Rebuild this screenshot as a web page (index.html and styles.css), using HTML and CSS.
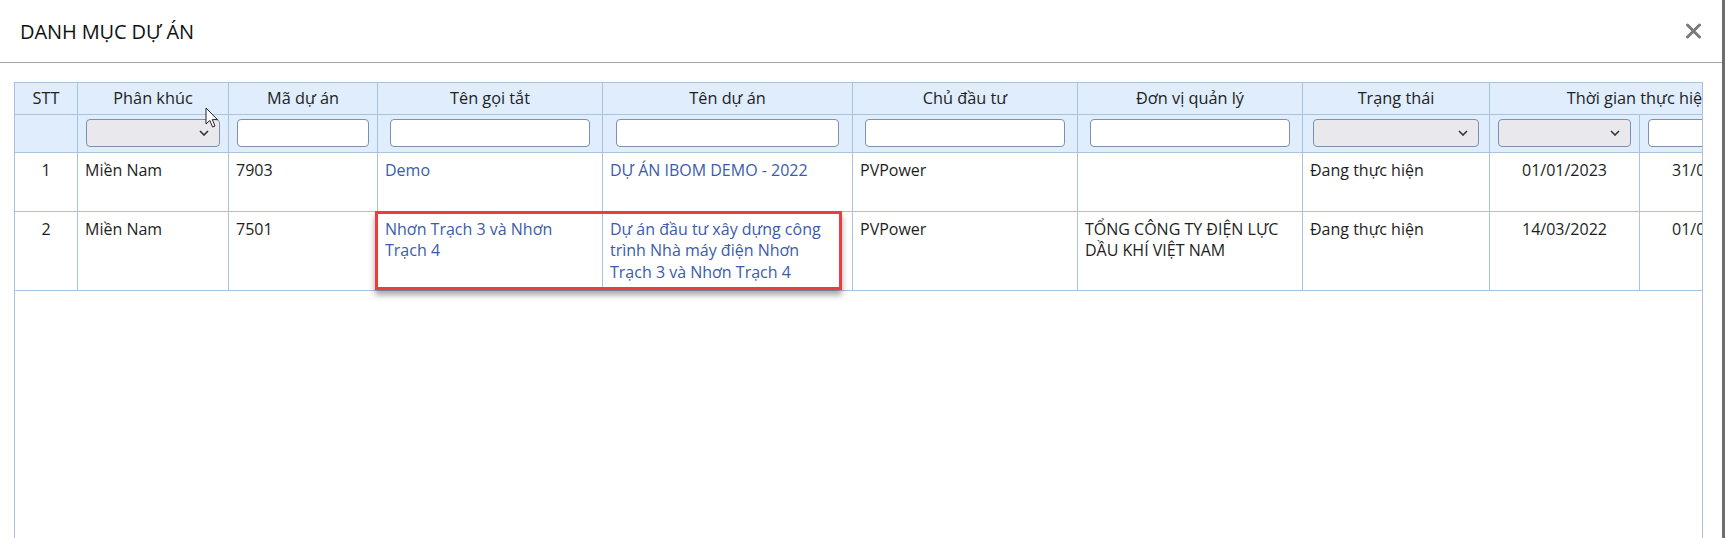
FILE: index.html
```html
<!DOCTYPE html>
<html lang="vi">
<head>
<meta charset="utf-8">
<title>Danh mục dự án</title>
<link rel="stylesheet" href="styles.css">
</head>
<body>
<div class="dialog">
  <div class="dialog-header">
    <h4 class="dialog-title">DANH MỤC DỰ ÁN</h4>
    <button class="close-btn" type="button" aria-label="Đóng">
      <svg width="17" height="16" viewBox="0 0 17 16"><path d="M2.5 2 L14.5 14 M14.5 2 L2.5 14" stroke="#7a7a7a" stroke-width="3" stroke-linecap="round"/></svg>
    </button>
  </div>
  <div class="dialog-body">
    <div class="grid-wrap">
      <table class="grid">
        <colgroup>
          <col class="c-stt"><col class="c-150"><col class="c-149"><col class="c-225"><col class="c-250"><col class="c-225"><col class="c-225"><col class="c-187"><col class="c-150"><col class="c-150">
        </colgroup>
        <thead>
          <tr class="head-row">
            <th>STT</th>
            <th>Phân khúc</th>
            <th>Mã dự án</th>
            <th>Tên gọi tắt</th>
            <th>Tên dự án</th>
            <th>Chủ đầu tư</th>
            <th>Đơn vị quản lý</th>
            <th>Trạng thái</th>
            <th colspan="2" class="last">Thời gian thực hiện</th>
          </tr>
          <tr class="filter-row">
            <th></th>
            <th><div class="f-select"><svg width="10" height="6" viewBox="0 0 10 6"><path d="M1 1 L5 5 L9 1" fill="none" stroke="#333" stroke-width="1.6"/></svg></div></th>
            <th><div class="f-input"></div></th>
            <th><div class="f-input"></div></th>
            <th><div class="f-input"></div></th>
            <th><div class="f-input"></div></th>
            <th><div class="f-input"></div></th>
            <th><div class="f-select"><svg width="10" height="6" viewBox="0 0 10 6"><path d="M1 1 L5 5 L9 1" fill="none" stroke="#333" stroke-width="1.6"/></svg></div></th>
            <th><div class="f-select"><svg width="10" height="6" viewBox="0 0 10 6"><path d="M1 1 L5 5 L9 1" fill="none" stroke="#333" stroke-width="1.6"/></svg></div></th>
            <th class="last"><div class="f-input"></div></th>
          </tr>
        </thead>
        <tbody>
          <tr class="row-1">
            <td class="center">1</td>
            <td>Miền Nam</td>
            <td>7903</td>
            <td><a class="link">Demo</a></td>
            <td><a class="link">DỰ ÁN IBOM DEMO - 2022</a></td>
            <td>PVPower</td>
            <td></td>
            <td>Đang thực hiện</td>
            <td class="center">01/01/2023</td>
            <td class="center last">31/01/2024</td>
          </tr>
          <tr>
            <td class="center">2</td>
            <td>Miền Nam</td>
            <td>7501</td>
            <td><a class="link">Nhơn Trạch 3 và Nhơn Trạch 4</a></td>
            <td><a class="link">Dự án đầu tư xây dựng công trình Nhà máy điện Nhơn Trạch 3 và Nhơn Trạch 4</a></td>
            <td>PVPower</td>
            <td>TỔNG CÔNG TY ĐIỆN LỰC DẦU KHÍ VIỆT NAM</td>
            <td>Đang thực hiện</td>
            <td class="center">14/03/2022</td>
            <td class="center last">01/05/2025</td>
          </tr>
        </tbody>
      </table>
      <div class="highlight"></div>
      <svg class="cursor" width="14" height="22" viewBox="0 0 14 22"><path d="M1 1 L1 17 L4.8 13.4 L7.6 20 L10 19 L7.3 12.6 L12.4 12.6 Z" fill="#fff" stroke="#222" stroke-width="1" stroke-linejoin="round"/></svg>
    </div>
  </div>
</div>
</body>
</html>
```

FILE: styles.css
```css
* { box-sizing: border-box; }

html, body {
  margin: 0;
  padding: 0;
  background: #ffffff;
}

body {
  width: 1725px;
  height: 538px;
  overflow: hidden;
  font-family: "Open Sans", "Noto Sans", "Liberation Sans", sans-serif;
  color: #222;
  display: flex;
}

.dialog {
  width: 1722px;
  height: 538px;
  background: #fff;
  display: flex;
  flex-direction: column;
  overflow: hidden;
  border-right: 3px solid #6e6e6e;
  flex: 0 0 1725px;
}

.dialog-header {
  height: 63px;
  flex: 0 0 63px;
  display: flex;
  align-items: center;
  justify-content: space-between;
  padding: 0 20px 0 20px;
  border-bottom: 1px solid #9ea7b5;
}

.dialog-title {
  margin: 0;
  font-size: 20px;
  font-weight: 400;
  color: #111;
  letter-spacing: -0.1px;
}

.close-btn {
  border: 0;
  background: transparent;
  padding: 0;
  width: 17px;
  height: 16px;
  display: flex;
  cursor: pointer;
}

.dialog-body {
  flex: 1;
  padding: 19px 19px 0 14px;
  overflow: hidden;
}

.grid-wrap {
  position: relative;
  height: 520px;
  border: 1px solid #a9c3db;
  overflow: hidden;
}

.grid {
  table-layout: fixed;
  border-collapse: separate;
  border-spacing: 0;
  width: 1775px;
  font-size: 16px;
  line-height: 21.4px;
}

.c-stt { width: 63px; }
.c-150 { width: 151px; }
.c-149 { width: 149px; }
.c-225 { width: 225px; }
.c-250 { width: 250px; }
.c-187 { width: 187px; }
.grid col:nth-child(9), .grid col:nth-child(10) { width: 150px; }

.grid th, .grid td {
  border-right: 1px solid #a9c3db;
  border-bottom: 1px solid #a9c3db;
  overflow: hidden;
}

.grid th {
  background: #dfedfc;
  font-weight: 400;
  color: #222;
  text-align: center;
  white-space: nowrap;
}

.head-row { height: 32px; }
.head-row th { padding: 0 4px; font-size: 16.3px; }

.filter-row { height: 38px; }
.filter-row th { padding: 4px 0 5px; vertical-align: middle; }

.f-input, .f-select {
  display: flex;
  align-items: center;
  justify-content: flex-end;
  width: 89.4%;
  height: 28px;
  margin: 0 auto;
  border: 1px solid #7f90ad;
  border-radius: 4px;
  background: #fff;
}

.f-select {
  background: #e9e9ed;
  padding-right: 10px;
}

.grid td {
  padding: 7px 12px 7px 7px;
  vertical-align: top;
  color: #1e1e1e;
}

.grid td.center {
  padding-left: 7px;
  padding-right: 7px;
}

.row-1 { height: 59px; }

.center { text-align: center; }

.link {
  color: #3b5ca8;
  text-decoration: none;
}

.highlight {
  position: absolute;
  left: 360px;
  top: 128px;
  width: 467px;
  height: 79px;
  border: 3px solid #ee3b3d;
  box-shadow: 0 5px 6px rgba(0, 0, 0, 0.35);
  pointer-events: none;
}

.cursor {
  position: absolute;
  left: 190px;
  top: 24px;
}
```
